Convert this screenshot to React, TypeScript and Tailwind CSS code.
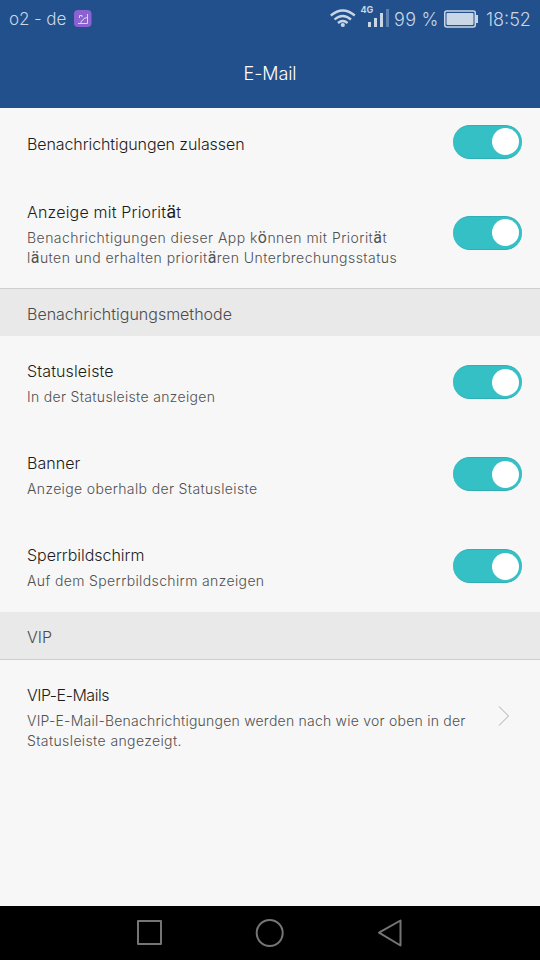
import type { ReactNode } from 'react';

type Line = { text: string; tracking: string };

function Toggle() {
  return (
    <button
      role="switch"
      aria-checked="true"
      className="flex h-[34px] w-[69px] shrink-0 items-center justify-end rounded-full border-y border-[#2fb0b6] bg-[#35c0c6] pr-[3px]"
    >
      <span className="h-[27px] w-[27px] rounded-full bg-white" />
    </button>
  );
}

// umlauts are drawn heavier and a bit larger than the rest of the light face
function Text({ children }: { children: string }) {
  return (
    <>
      {children.split(/([äö])/).map((part, i) =>
        /^[äö]$/.test(part) ? (
          <span key={i} className="font-['Roboto'] text-[1.14em] leading-none font-normal">{part}</span>
        ) : (
          part
        ),
      )}
    </>
  );
}

function Row({ title, lines, className = 'pb-[21px]', children }: { title: Line; lines: Line[]; className?: string; children: ReactNode }) {
  return (
    <div className="flex items-center justify-between pr-[18px] pl-[27px]">
      <div className={`pt-[23px] ${className}`}>
        <h2 className={`h-6 text-[16px] leading-6 text-[#1c1c1c] ${title.tracking}`}><Text>{title.text}</Text></h2>
        <div className="mt-1 text-[14px] leading-5 whitespace-nowrap text-[#505050]">
          {lines.map((line) => (
            <p key={line.text} className={`h-5 ${line.tracking}`}><Text>{line.text}</Text></p>
          ))}
        </div>
      </div>
      {children}
    </div>
  );
}

function StatusBar() {
  return (
    <div className="flex h-[38px] items-center justify-between pr-[9px] pl-[9px] text-[18px] text-[#c9d6e6]">
      <div className="flex items-center">
        <span className="w-[58px] pt-[2px] text-[17px] tracking-[-0.1px] whitespace-nowrap">o2 - de</span>
        <svg className="ml-[7px]" width="18" height="18" viewBox="0 0 18 18" fill="none">
          <rect width="17.500" height="17" rx="4" fill="#8b63d0" />
          <path d="M4 13.500h9.500V4M5.500 8V5.500H8V7M7 13v-1.500l2-1.500 1-1.500 3-1" stroke="#ddd0f4" />
        </svg>
      </div>
      <div className="flex items-center">
        <svg width="60" height="30" viewBox="330 4 60 30" fill="none">
          <g stroke="#c9d6e6" strokeWidth="2.300">
            <path d="M330.800 15.500q12-10 24 0M334.500 19.500q8.200-7 16.500 0M338 23q4.800-4 9.600 0" />
          </g>
          <circle cx="342.800" cy="25" r="2.100" fill="#c9d6e6" />
          <text x="360.500" y="13" fontSize="9" fontWeight="700" fill="#c9d6e6">4G</text>
          <path d="M368 22h3v5h-3zM374 18h3v9h-3zM380 13h3v14h-3z" fill="#c9d6e6" />
          <path d="M386 9h3v18h-3z" fill="#5d82b2" />
        </svg>
        <span className="ml-[4px] w-[45px] tracking-[0.3px] whitespace-nowrap">99 %</span>
        <svg className="ml-[5px]" width="35" height="18" viewBox="0 0 35 18" fill="none">
          <rect x="0.750" y="1" width="30.500" height="16" rx="2" stroke="#c9d6e6" strokeWidth="1.500" />
          <rect x="2.500" y="3" width="27" height="12" rx="1" fill="#c9d6e6" />
          <path d="M32 5h2v8h-2z" fill="#c9d6e6" />
        </svg>
        <span className="ml-[7px] w-[45px] whitespace-nowrap">18:52</span>
      </div>
    </div>
  );
}

export default function App() {
  return (
    <div className="flex h-[960px] w-[540px] flex-col overflow-hidden bg-[#f7f7f7] font-['Inter',sans-serif] font-light">
      <header className="h-[108px] bg-[#21508c]">
        <StatusBar />
        <h1 className="pt-[24px] text-center text-[18px] leading-6 tracking-[-0.1px] text-white">E-Mail</h1>
      </header>

      <main className="flex-1">
        <div className="flex h-[69px] items-center justify-between pr-[18px] pb-[2px] pl-[27px]">
          <h2 className="pt-[4px] text-[16px] leading-6 tracking-[-0.09px] text-[#1c1c1c]">Benachrichtigungen zulassen</h2>
          <Toggle />
        </div>
        <Row
          className="pb-[20px]"
          title={{ text: 'Anzeige mit Priorität', tracking: 'tracking-[0.19px]' }}
          lines={[
            { text: 'Benachrichtigungen dieser App können mit Priorität', tracking: 'tracking-[0.46px]' },
            { text: 'läuten und erhalten prioritären Unterbrechungsstatus', tracking: 'tracking-[0.46px]' },
          ]}
        >
          <Toggle />
        </Row>

        <div className="flex h-[48px] items-center border-t border-[#cfcfcf] bg-[#e9e9e9] pt-[2px] pl-[27px] text-[16px] text-[#4c4c4c]">
          Benachrichtigungsmethode
        </div>
        <Row
          title={{ text: 'Statusleiste', tracking: 'tracking-[0.13px]' }}
          lines={[{ text: 'In der Statusleiste anzeigen', tracking: 'tracking-[0.32px]' }]}
        >
          <Toggle />
        </Row>
        <Row
          title={{ text: 'Banner', tracking: 'tracking-[0.05px]' }}
          lines={[{ text: 'Anzeige oberhalb der Statusleiste', tracking: 'tracking-[0.36px]' }]}
        >
          <Toggle />
        </Row>
        <Row
          title={{ text: 'Sperrbildschirm', tracking: 'tracking-[-0.03px]' }}
          lines={[{ text: 'Auf dem Sperrbildschirm anzeigen', tracking: 'tracking-[0.37px]' }]}
        >
          <Toggle />
        </Row>

        <div className="flex h-[48px] items-center border-b border-[#cfcfcf] bg-[#e9e9e9] pt-[3px] pl-[27px] text-[16px] text-[#4c4c4c]">
          VIP
        </div>
        <Row
          title={{ text: 'VIP-E-Mails', tracking: 'tracking-[-0.48px]' }}
          lines={[
            { text: 'VIP-E-Mail-Benachrichtigungen werden nach wie vor oben in der', tracking: 'tracking-[0.23px]' },
            { text: 'Statusleiste angezeigt.', tracking: 'tracking-[0.38px]' },
          ]}
        >
          <svg className="mr-[12px]" width="12" height="20" viewBox="0 0 12 20" fill="none" stroke="#aaa">
            <path d="M1 0.500L10.500 10 1 19.500" />
          </svg>
        </Row>
      </main>

      {/* system navigation */}
      <nav className="h-[54px] bg-black">
        <svg width="540" height="54" viewBox="0 906 540 54" fill="none" stroke="#757575" strokeWidth="2" strokeLinejoin="round">
          <rect x="138" y="921" width="23" height="23" />
          <circle cx="269.700" cy="933" r="13" />
          <path d="M400.500 920.500v25L379 932.700z" />
        </svg>
      </nav>
    </div>
  );
}
